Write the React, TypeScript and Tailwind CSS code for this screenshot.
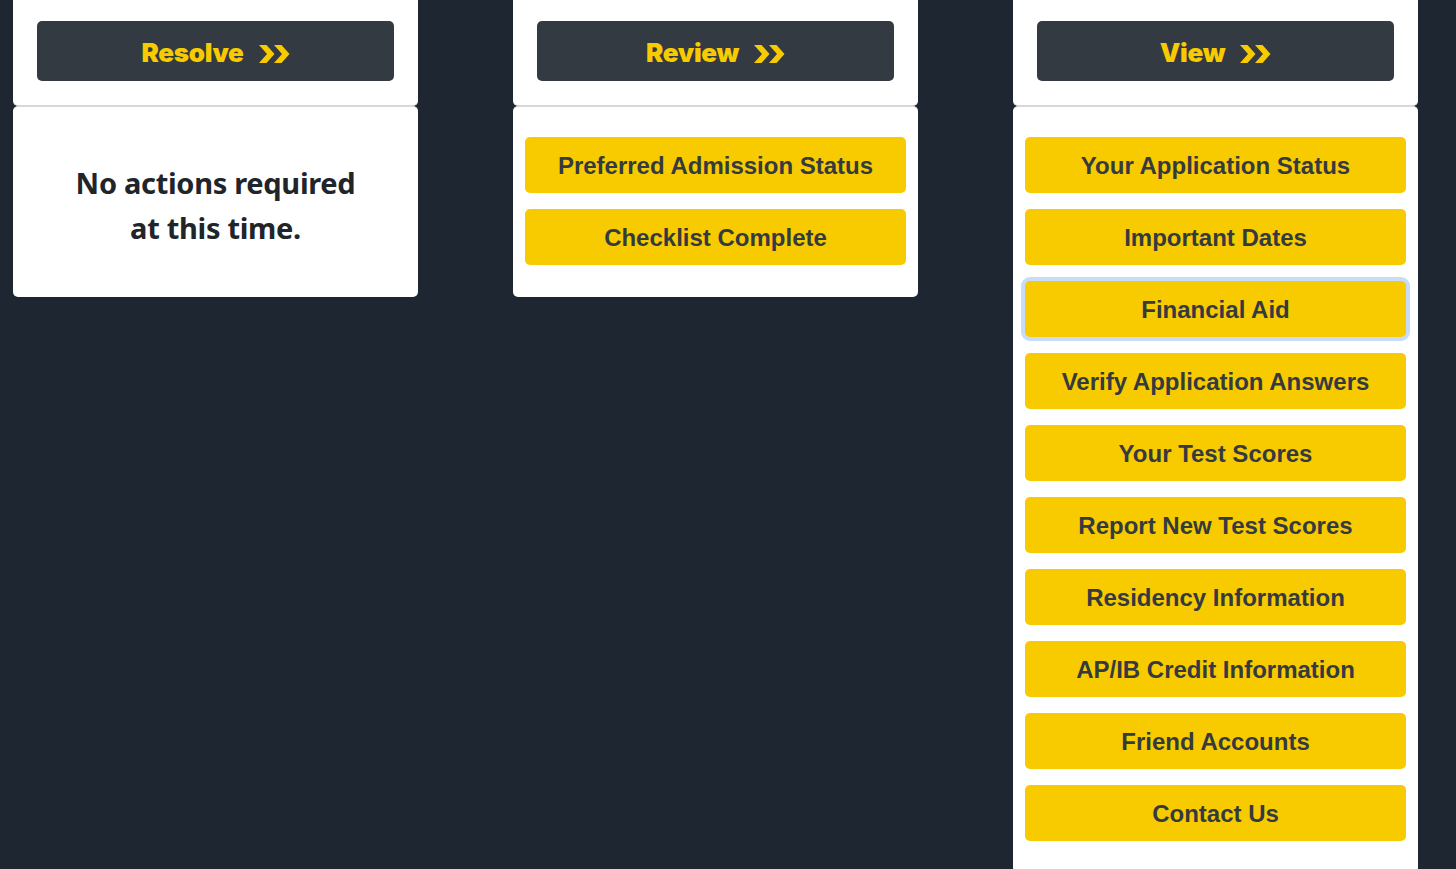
import React from 'react'

const viewLinks = [
  'Your Application Status',
  'Important Dates',
  'Financial Aid',
  'Verify Application Answers',
  'Your Test Scores',
  'Report New Test Scores',
  'Residency Information',
  'AP/IB Credit Information',
  'Friend Accounts',
  'Contact Us',
]

const reviewLinks = ['Preferred Admission Status', 'Checklist Complete']

function Chevrons() {
  return (
    <svg width="31" height="20" viewBox="0 0 31 20" className="shrink-0 mt-[5px]">
      <polygon points="0,1 7.5,1 15.5,10 7.5,19 0,19 8,10" fill="#f7cb00" />
      <polygon points="15,1 22.5,1 30.5,10 22.5,19 15,19 23,10" fill="#f7cb00" />
    </svg>
  )
}

function HeadCard({ label }: { label: string }) {
  return (
    <div className="bg-white rounded-b-[5px] border-b border-[#d8d8d8] px-[24px] pt-[21px] pb-[24px]">
      <button className="w-full h-[60px] rounded-[5px] bg-[#343a42] flex items-center justify-center gap-[15px] text-[#f7cb00] text-[26px] font-black font-['Inter',sans-serif] tracking-[-0.3px]">
        <span className="mt-[3px]">{label}</span>
        <Chevrons />
      </button>
    </div>
  )
}

function LinkButton({ label, focused }: { label: string; focused?: boolean }) {
  return (
    <button
      className={[
        'w-full h-[56px] rounded-[5px] bg-[#f7cb00] text-[#343a40] text-[24px] font-bold pt-[2px]',
        "font-['Liberation_Sans',Arial,sans-serif] flex items-center justify-center",
        focused ? 'shadow-[0_0_0_4px_#c7dcf8]' : '',
      ].join(' ')}
    >
      {label}
    </button>
  )
}

export default function App() {
  return (
    <div className="min-h-screen bg-[#1e2731] pl-[13px]">
      <div className="flex gap-[95px] items-start">
        {/* Resolve */}
        <div className="w-[405px]">
          <HeadCard label="Resolve" />
          <div className="bg-white rounded-[5px] border-t border-[#d8d8d8] h-[191px] flex items-center justify-center">
            <p className="text-center text-[#212529] text-[29px] leading-[45px] font-bold font-['Noto_Sans',sans-serif] tracking-[-0.3px] mt-[6px]">
              No actions required
              <br />
              at this time.
            </p>
          </div>
        </div>

        {/* Review */}
        <div className="w-[405px]">
          <HeadCard label="Review" />
          <div className="bg-white rounded-[5px] border-t border-[#d8d8d8] px-[12px] pt-[30px] pb-[32px] flex flex-col gap-[16px]">
            {reviewLinks.map((l) => (
              <LinkButton key={l} label={l} />
            ))}
          </div>
        </div>

        {/* View */}
        <div className="w-[405px]">
          <HeadCard label="View" />
          <div className="bg-white rounded-[5px] border-t border-[#d8d8d8] px-[12px] pt-[30px] pb-[32px] flex flex-col gap-[16px]">
            {viewLinks.map((l) => (
              <LinkButton key={l} label={l} focused={l === 'Financial Aid'} />
            ))}
          </div>
        </div>
      </div>
    </div>
  )
}
